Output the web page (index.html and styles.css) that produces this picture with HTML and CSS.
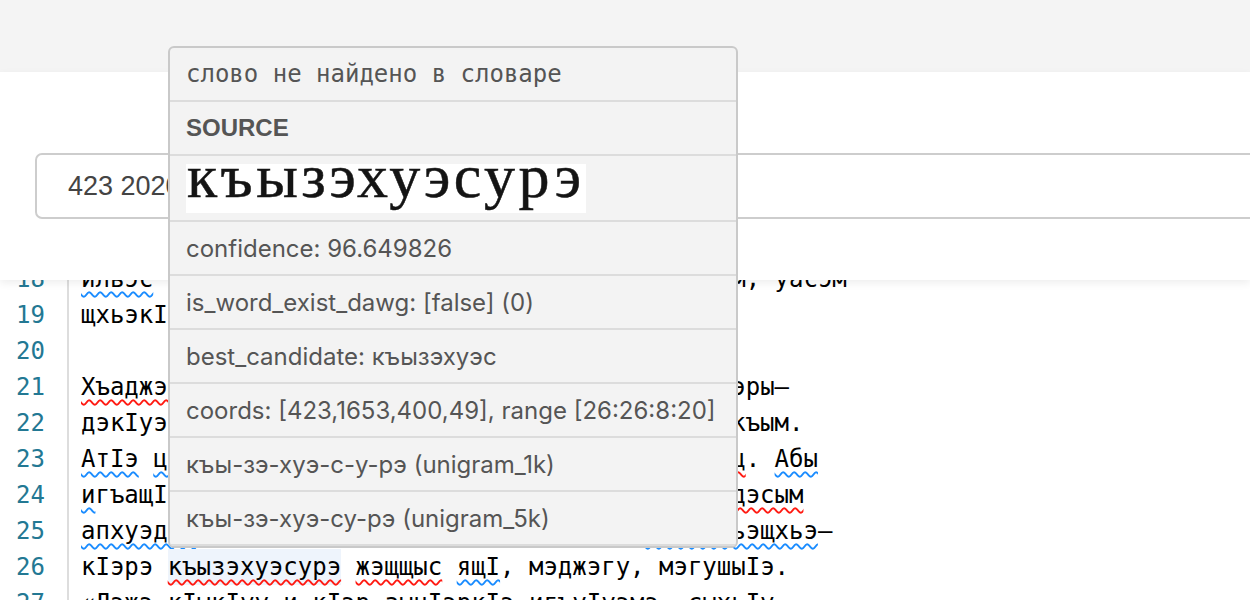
FILE: index.html
```html
<!DOCTYPE html>
<html lang="ru">
<head>
<meta charset="utf-8">
<title>OCR proofreading</title>
<link rel="stylesheet" href="styles.css">
</head>
<body>
<div class="topbar"></div>
<header class="searchbar">
  <div class="field">423 2020 1653</div>
</header>
<main class="editor">
  <div class="gutter">
    <div class="ln">18</div>
    <div class="ln">19</div>
    <div class="ln">20</div>
    <div class="ln">21</div>
    <div class="ln">22</div>
    <div class="ln">23</div>
    <div class="ln">24</div>
    <div class="ln">25</div>
    <div class="ln">26</div>
    <div class="ln">27</div>
  </div>
  <div class="code">
    <div class="line"><span class="info">ильэс</span> пщыкIутI хъуауэ и адэ-анэм я унагъуэ дым, уасэм</div>
    <div class="line">щхьэкIэ фIыуэ еджэрт.</div>
    <div class="line"></div>
    <div class="line"><span class="err">Хъаджэмырзэ</span> и къуажэм щыпсэурт, абы ныбжьэгъуэры–</div>
    <div class="line">дэкIуэну хуейт, ауэ абы и гугъэр захуэу щыта къым.</div>
    <div class="line"><span class="info">АтIэ</span> <span class="info">цIыхухэр</span> нэхъыбэм ящIэртэкъым <span class="err">гъэщIэгъуэц</span>. <span class="info">Абы</span></div>
    <div class="line"><span class="info">и</span>гъащIэм псом къуажэм и унагъуэр зэрыщыту <span class="err">къэдэсым</span></div>
    <div class="line"><span class="info">апхуэдэу</span> зэман куэдкIэ щIалэ гуп махуэ <span class="info">зэхуэжьэщхьэ</span>–</div>
    <div class="line">кIэрэ <span class="hl err">къызэхуэсурэ</span> <span class="err">жэщщыс</span> <span class="info">ящI</span>, мэджэгу, мэгушыIэ.</div>
    <div class="line">«Лэжэ кIыкIуу и кIэр зычIэркIэ игъуIуэмэ, сыхьIу</div>
  </div>
</main>
<aside class="hover">
  <div class="row mono">слово не найдено в словаре</div>
  <div class="row title">SOURCE</div>
  <div class="row picture"><div class="scan">къызэхуэсурэ</div></div>
  <div class="row">confidence: 96.649826</div>
  <div class="row">is_word_exist_dawg: [false] (0)</div>
  <div class="row">best_candidate: къызэхуэс</div>
  <div class="row">coords: [423,1653,400,49], range [26:26:8:20]</div>
  <div class="row">къы-зэ-хуэ-с-у-рэ (unigram_1k)</div>
  <div class="row">къы-зэ-хуэ-су-рэ (unigram_5k)</div>
</aside>
</body>
</html>
```

FILE: styles.css
```css
html, body {
  margin: 0;
  padding: 0;
  height: 100%;
  overflow: hidden;
  background: #ffffff;
}

body {
  display: flex;
  flex-direction: column;
  font-family: "Inter", "Liberation Sans", sans-serif;
}

.topbar {
  height: 72px;
  flex: none;
  background: #f4f4f4;
}

.searchbar {
  flex: none;
  height: 208px;
  box-sizing: border-box;
  padding: 81px 0 0 35px;
  background: #ffffff;
  position: relative;
  z-index: 2;
  overflow: hidden;
  box-shadow: 0 3px 8px rgba(0, 0, 0, 0.07);
}

.field {
  width: 1300px;
  height: 66px;
  box-sizing: border-box;
  border: 2px solid #cdcdcd;
  border-radius: 7px;
  padding-left: 31px;
  display: flex;
  align-items: center;
  font-family: "Liberation Sans", Arial, sans-serif;
  font-size: 27px;
  color: #444444;
}

.editor {
  flex: 1;
  display: flex;
  margin-top: -19px;
  font-family: "DejaVu Sans Mono", monospace;
  font-size: 24px;
  line-height: 36px;
}

.gutter {
  width: 45px;
  padding-right: 22px;
  border-right: 2px solid #dddddd;
  text-align: right;
  color: #237893;
}

.ln {
  height: 36px;
}

.code {
  padding-left: 12px;
  color: #000000;
}

.line {
  height: 36px;
  white-space: pre;
}

.err,
.info {
  text-decoration-line: underline;
  text-decoration-style: wavy;
  text-decoration-thickness: 2px;
  text-underline-offset: 4px;
  text-decoration-skip-ink: none;
}

.err {
  text-decoration-color: #ff1a12;
}

.info {
  text-decoration-color: #1a8cff;
}

.hl {
  display: inline-block;
  height: 36px;
  background: #eef4fc;
}

.hover {
  position: absolute;
  left: 168px;
  top: 46px;
  width: 570px;
  box-sizing: border-box;
  border: 2px solid #c9c9c9;
  border-radius: 6px;
  background: #f3f3f3;
  overflow: hidden;
  z-index: 5;
}

.row {
  height: 52px;
  padding: 0 16px;
  border-bottom: 2px solid #dcdcdc;
  display: flex;
  align-items: center;
  font-size: 24px;
  color: #555555;
  white-space: nowrap;
}

.mono {
  font-family: "DejaVu Sans Mono", monospace;
  font-size: 24px;
  color: #555555;
}

.title {
  font-family: "Liberation Sans", Arial, sans-serif;
  font-weight: bold;
  font-size: 24px;
}

.picture {
  height: 64px;
}

.scan {
  width: 400px;
  height: 49px;
  box-sizing: border-box;
  padding-left: 1px;
  background: #ffffff;
  color: #141414;
  font-family: "Liberation Serif", "DejaVu Serif", serif;
  font-size: 62px;
  line-height: 25px;
  letter-spacing: 3.5px;
  -webkit-text-stroke: 0.5px #141414;
  white-space: nowrap;
}
```
